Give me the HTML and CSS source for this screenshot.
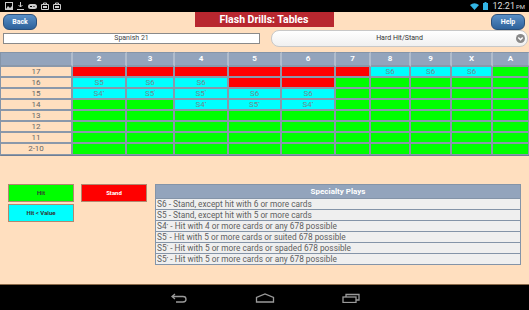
FILE: index.html
```html
<!DOCTYPE html>
<html lang="en">
<head>
  <meta charset="UTF-8">
  <title>Flash Drills: Tables</title>
  <link rel="stylesheet" href="styles.css">
</head>
<body>

  <div class="statusbar">
    <div class="notif-icons">
      <svg width="8" height="8" viewBox="0 0 8 8"><rect x="0.5" y="0.5" width="7" height="7" fill="none" stroke="#ccc"/><path d="M1 7 L3 4 L5 6 L7 4 V7 Z" fill="#ccc"/></svg>
      <svg width="7" height="8" viewBox="0 0 7 8"><path d="M3.5 0 V5 M1.5 3 L3.5 5 L5.5 3 M0 7.5 H7" fill="none" stroke="#ccc"/></svg>
      <svg width="9" height="7" viewBox="0 0 9 7"><rect x="0" y="1" width="9" height="5" rx="2.5" fill="#ccc"/><path d="M2 3.5 H4 M6 3 V4" stroke="#000"/></svg>
      <svg width="8" height="8" viewBox="0 0 8 8"><path d="M0.5 2.5 H7.5 V7.5 H0.5 Z M2.5 2.5 V1 H5.5 V2.5" fill="none" stroke="#ccc"/><rect x="2" y="4" width="4" height="2" fill="#ccc"/></svg>
      <svg width="8" height="8" viewBox="0 0 8 8"><path d="M0.5 2.5 H7.5 V7.5 H0.5 Z M2.5 2.5 V1 H5.5 V2.5" fill="none" stroke="#ccc"/><rect x="2" y="4" width="4" height="2" fill="#ccc"/></svg>
    </div>
    <div class="sys-icons">
      <svg width="9" height="7" viewBox="0 0 9 7"><path d="M0 2 Q4.5 -1.5 9 2 L4.5 7 Z" fill="#33b5e5"/></svg>
      <svg width="5" height="8" viewBox="0 0 5 8"><rect x="1.5" y="0" width="2" height="1" fill="#33b5e5"/><rect x="0" y="1" width="5" height="7" fill="#33b5e5"/></svg>
      <span class="clock">12:21<small>PM</small></span>
    </div>
  </div>

  <div class="screen">
    <div class="topbar">
      <button class="nav-btn">Back</button>
      <div class="title">Flash Drills: Tables</div>
      <button class="nav-btn">Help</button>
    </div>

    <div class="pickers">
      <div class="game-field">Spanish 21</div>
      <div class="drill-select">
        Hard Hit/Stand
        <svg class="chev" width="9" height="9" viewBox="0 0 9 9"><circle cx="4.5" cy="4.5" r="4.5" fill="#8a8a8a"/><path d="M2.3 3.5 L4.5 5.7 L6.7 3.5" fill="none" stroke="#fff" stroke-width="1.5"/></svg>
      </div>
    </div>

    <div class="chart">
      <div class="hd"></div><div class="hd">2</div><div class="hd">3</div><div class="hd">4</div><div class="hd">5</div><div class="hd">6</div><div class="hd">7</div><div class="hd">8</div><div class="hd">9</div><div class="hd">X</div><div class="hd">A</div>

      <div class="lbl">17</div><div class="r"></div><div class="r"></div><div class="r"></div><div class="r"></div><div class="r"></div><div class="r"></div><div class="c">S6</div><div class="c">S6</div><div class="c">S6</div><div class="g"></div>

      <div class="lbl">16</div><div class="c">S5</div><div class="c">S6</div><div class="c">S6</div><div class="r"></div><div class="r"></div><div class="g"></div><div class="g"></div><div class="g"></div><div class="g"></div><div class="g"></div>

      <div class="lbl">15</div><div class="c">S4<sup>•</sup></div><div class="c">S5<sup>'</sup></div><div class="c">S5<sup>"</sup></div><div class="c">S6</div><div class="c">S6</div><div class="g"></div><div class="g"></div><div class="g"></div><div class="g"></div><div class="g"></div>

      <div class="lbl">14</div><div class="g"></div><div class="g"></div><div class="c">S4<sup>•</sup></div><div class="c">S5<sup>•</sup></div><div class="c">S4<sup>•</sup></div><div class="g"></div><div class="g"></div><div class="g"></div><div class="g"></div><div class="g"></div>

      <div class="lbl">13</div><div class="g"></div><div class="g"></div><div class="g"></div><div class="g"></div><div class="g"></div><div class="g"></div><div class="g"></div><div class="g"></div><div class="g"></div><div class="g"></div>

      <div class="lbl">12</div><div class="g"></div><div class="g"></div><div class="g"></div><div class="g"></div><div class="g"></div><div class="g"></div><div class="g"></div><div class="g"></div><div class="g"></div><div class="g"></div>

      <div class="lbl">11</div><div class="g"></div><div class="g"></div><div class="g"></div><div class="g"></div><div class="g"></div><div class="g"></div><div class="g"></div><div class="g"></div><div class="g"></div><div class="g"></div>

      <div class="lbl">2-10</div><div class="g"></div><div class="g"></div><div class="g"></div><div class="g"></div><div class="g"></div><div class="g"></div><div class="g"></div><div class="g"></div><div class="g"></div><div class="g"></div>
    </div>

    <div class="bottom">
      <div class="legend">
        <div class="key key-hit">Hit</div>
        <div class="key key-stand">Stand</div>
        <div class="key key-value">Hit &lt; Value</div>
      </div>

      <div class="plays">
        <div class="plays-head">Specialty Plays</div>
        <div class="play">S6 - Stand, except hit with 6 or more cards</div>
        <div class="play">S5 - Stand, except hit with 5 or more cards</div>
        <div class="play">S4<sup>•</sup> - Hit with 4 or more cards or any 678 possible</div>
        <div class="play">S5<sup>'</sup> - Hit with 5 or more cards or suited 678 possible</div>
        <div class="play">S5<sup>"</sup> - Hit with 5 or more cards or spaded 678 possible</div>
        <div class="play">S5<sup>•</sup> - Hit with 5 or more cards or any 678 possible</div>
      </div>
    </div>
  </div>

  <div class="navbar">
    <svg width="18" height="10" viewBox="0 0 18 10"><path d="M5 1 L2 3.5 L5 6 M2 3.5 H13 Q16 3.5 16 6.2 Q16 9 13 9 H6" fill="none" stroke="#9a9a9a" stroke-width="1.3"/></svg>
    <svg width="20" height="10" viewBox="0 0 20 10"><path d="M1.5 9 V4.5 L10 1 L18.5 4.5 V9 Z" fill="none" stroke="#9a9a9a" stroke-width="1.3"/></svg>
    <svg width="18" height="10" viewBox="0 0 18 10"><rect x="1" y="4" width="13" height="5.5" fill="none" stroke="#9a9a9a" stroke-width="1.3"/><path d="M4 4 V1.5 H17 V7 H14" fill="none" stroke="#9a9a9a" stroke-width="1.3"/></svg>
  </div>

</body>
</html>
```

FILE: styles.css
```css
body {
  margin: 0;
  width: 529px;
  height: 310px;
  overflow: hidden;
  font-family: 'Roboto', 'Liberation Sans', sans-serif;
  background: #000;
}

.statusbar {
  height: 12px;
  background: #000;
  display: flex;
  align-items: center;
  justify-content: space-between;
  padding: 0 4px 0 5px;
}

.notif-icons,
.sys-icons {
  display: flex;
  align-items: center;
  gap: 4px;
}

.clock {
  color: #ddd;
  font-size: 9px;
  line-height: 12px;
  margin-left: 1px;
}

.clock small {
  font-size: 6px;
  margin-left: 1px;
}

.screen {
  height: 272px;
  background: #ffdfbf;
  border-bottom: 1px solid #8a6a4a;
}

.topbar {
  height: 18px;
  display: flex;
  justify-content: space-between;
  align-items: flex-start;
  padding: 0 4px 0 3px;
}

.nav-btn {
  margin-top: 2px;
  width: 34px;
  height: 16px;
  padding: 0;
  border: 1px solid #2a4f7a;
  border-radius: 6px;
  background: linear-gradient(#5a8fc6, #2e629b);
  color: #fff;
  font-family: inherit;
  font-size: 7px;
  font-weight: bold;
}

.title {
  width: 139px;
  height: 15px;
  background: #b8272f;
  color: #fff;
  font-size: 10.5px;
  font-weight: bold;
  line-height: 15px;
  text-align: center;
}

.pickers {
  height: 17px;
  display: flex;
  align-items: flex-start;
  padding-left: 3px;
}

.game-field {
  margin-top: 3px;
  width: 255px;
  height: 9px;
  border: 1px solid #8a8a8a;
  background: #fff;
  color: #444;
  font-size: 7px;
  line-height: 9px;
  text-align: center;
}

.drill-select {
  position: relative;
  margin-left: 11px;
  width: 255px;
  height: 15px;
  border: 1px solid #c8c8c8;
  border-radius: 8px;
  background: linear-gradient(#ffffff, #f0f0f0);
  color: #333;
  font-size: 7px;
  line-height: 15px;
  text-align: center;
}

.chev {
  position: absolute;
  right: 2px;
  top: 3px;
}

.chart {
  margin-top: 5px;
  display: grid;
  grid-template-columns: 72px 54px 48px 54px 53px 54px 35px 40px 41px 41px 37px;
  grid-template-rows: 15px repeat(8, 11px);
  border-left: 1px solid #8494a8;
  border-bottom: 1px solid #6f7e94;
  font-size: 8px;
  line-height: 9px;
  text-align: center;
}

.chart > div {
  box-sizing: border-box;
  border-right: 2px solid #8a98aa;
  border-bottom: 2px solid #8a98aa;
}

.chart .hd {
  background: #93a4bc;
  border-top: 1px solid #8494a8;
  border-right-color: #b0bccc;
  color: #fff;
  font-weight: bold;
  line-height: 12px;
}

.chart .lbl {
  background: #ffdfbf;
  color: #666;
}

.chart .r {
  background: #ff0000;
}

.chart .g {
  background: #00ff00;
}

.chart .c {
  background: #00ffff;
  color: #6e8a90;
}

.chart > div:last-child,
.chart > div:nth-last-child(-n+11) {
  border-bottom-width: 1px;
}

sup {
  font-size: 5px;
  vertical-align: 2px;
  line-height: 0;
}

.bottom {
  margin-top: 28px;
  display: flex;
  align-items: flex-start;
  padding-left: 8px;
}

.legend {
  display: grid;
  grid-template-columns: 66px 66px;
  column-gap: 7px;
  row-gap: 2px;
}

.key {
  height: 16px;
  border: 1px solid #b08870;
  font-size: 6px;
  font-weight: bold;
  line-height: 16px;
  text-align: center;
}

.key-hit {
  background: #00ff00;
  color: #333;
}

.key-stand {
  background: #ff0000;
  color: #fff;
}

.key-value {
  background: #00ffff;
  color: #333;
}

.plays {
  margin-left: 8px;
  width: 364px;
  border: 1px solid #8494a8;
  background: #8494a8;
  display: flex;
  flex-direction: column;
  gap: 1px;
}

.plays-head {
  height: 13px;
  background: #93a4bc;
  color: #fff;
  font-size: 8px;
  font-weight: bold;
  line-height: 13px;
  text-align: center;
}

.play {
  height: 10px;
  background: #efefef;
  color: #5e5e5e;
  font-size: 8.3px;
  line-height: 10px;
  padding-left: 1px;
}

.navbar {
  height: 25px;
  background: #000;
  display: flex;
  align-items: center;
  justify-content: center;
  gap: 67px;
  padding-left: 1px;
}
```
